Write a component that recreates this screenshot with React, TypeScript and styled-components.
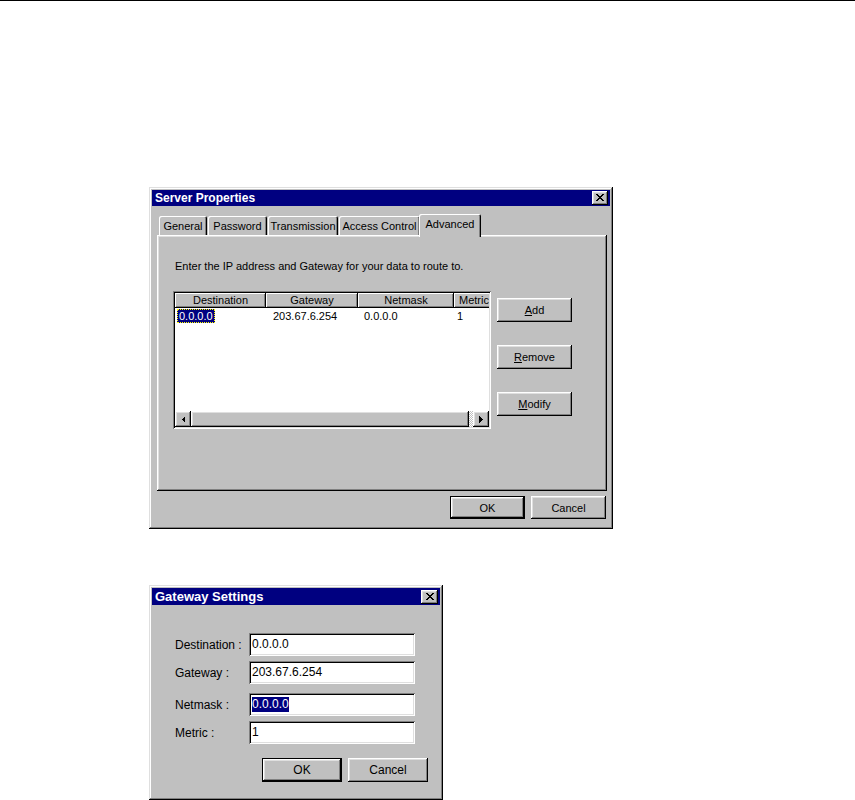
import React from "react";
import styled, { createGlobalStyle } from "styled-components";

const Global = createGlobalStyle`
  html, body { margin: 0; padding: 0; background: #fff; }
  body { font-family: "Liberation Sans", Arial, sans-serif; color: #000; }
  * { box-sizing: border-box; }
`;

const Page = styled.div`
  width: 855px;
  height: 800px;
  overflow: hidden;
  background: #fff;
`;

const TopRule = styled.div`
  height: 1px;
  background: #000;
`;

const raised = `
  box-shadow: inset -1px -1px #000, inset 1px 1px #fff, inset -2px -2px #808080, inset 2px 2px #dfdfdf;
`;

const sunken = `
  box-shadow: inset 1px 1px #808080, inset -1px -1px #fff, inset 2px 2px #000, inset -2px -2px #dfdfdf;
`;

const Win = styled.div<{ $w: number; $h: number; $mt: number; $fs: number }>`
  width: ${(p) => p.$w}px;
  height: ${(p) => p.$h}px;
  margin: ${(p) => p.$mt}px 0 0 149px;
  background: #c0c0c0;
  padding: 3px;
  font-size: ${(p) => p.$fs}px;
  box-shadow: inset -1px -1px #000, inset 1px 1px #dfdfdf, inset -2px -2px #808080, inset 2px 2px #fff;
  display: flex;
  flex-direction: column;
`;

const TitleBar = styled.div<{ $h: number; $fs: number }>`
  height: ${(p) => p.$h}px;
  background: #000080;
  color: #fff;
  font-weight: bold;
  font-size: ${(p) => p.$fs}px;
  display: flex;
  align-items: center;
  justify-content: space-between;
  padding: 0 2px 0 3px;
  flex-shrink: 0;
`;

const CloseBtn = styled.div<{ $w: number; $h: number }>`
  width: ${(p) => p.$w}px;
  height: ${(p) => p.$h}px;
  background: #c0c0c0;
  ${raised}
  display: flex;
  align-items: center;
  justify-content: center;
  padding-bottom: 1px;
`;

const CloseIcon = () => (
  <svg width="8" height="7" viewBox="0 0 8 7" shapeRendering="crispEdges">
    <path
      d="M0 0h2v1h-2zM6 0h2v1h-2zM1 1h2v1h-2zM5 1h2v1h-2zM2 2h4v1h-4zM3 3h2v1h-2zM2 4h4v1h-4zM1 5h2v1h-2zM5 5h2v1h-2zM0 6h2v1h-2zM6 6h2v1h-2z"
      fill="#000"
    />
  </svg>
);

/* ---------- Server Properties ---------- */

const Body1 = styled.div`
  display: flex;
  flex-direction: column;
  padding: 8px 3px 0 5px;
  flex: 1;
`;

const TabStrip = styled.div`
  display: flex;
  align-items: flex-end;
  height: 21px;
  padding-left: 2px;
  position: relative;
  z-index: 1;
`;

const Tab = styled.div<{ $w: number; $active?: boolean }>`
  width: ${(p) => p.$w}px;
  height: ${(p) => (p.$active ? 23 : 19)}px;
  margin: ${(p) => (p.$active ? "0 -2px -2px -2px" : "0 1px 0 0")};
  padding-bottom: ${(p) => (p.$active ? 4 : 0)}px;
  background: #c0c0c0;
  border-top-left-radius: 2px;
  border-top-right-radius: 2px;
  box-shadow: inset 1px 1px #fff, inset -1px 0 #000, inset -2px 0 #808080;
  display: flex;
  align-items: center;
  justify-content: center;
  font-size: 11px;
  white-space: nowrap;
`;

const Panel = styled.div`
  width: 450px;
  height: 256px;
  background: #c0c0c0;
  box-shadow: inset -1px -1px #000, inset 1px 1px #fff, inset -2px -2px #808080, inset 2px 2px #dfdfdf;
  padding: 24px 0 0 16px;
  display: flex;
  flex-direction: column;
`;

const Hint = styled.div`
  font-size: 11px;
  line-height: 14px;
  padding-left: 2px;
`;

const ContentRow = styled.div`
  display: flex;
  gap: 6px;
  margin-top: 18px;
`;

const ListView = styled.div`
  width: 318px;
  height: 138px;
  background: #fff;
  ${sunken}
  padding: 2px;
  display: flex;
  flex-direction: column;
  overflow: hidden;
`;

const HeaderRow = styled.div`
  display: flex;
  height: 15px;
  flex-shrink: 0;
  overflow: hidden;
`;

const HeaderCell = styled.div<{ $w: number }>`
  width: ${(p) => p.$w}px;
  flex-shrink: 0;
  background: #c0c0c0;
  box-shadow: inset -1px -1px #000, inset 1px 1px #fff, inset -2px -2px #808080;
  font-size: 11px;
  line-height: 14px;
  text-align: center;
  white-space: nowrap;
  overflow: hidden;
`;

const DataRow = styled.div`
  display: flex;
  height: 14px;
  margin-top: 1px;
  font-size: 11px;
  line-height: 14px;
`;

const DataCell = styled.div<{ $w: number; $pl: number }>`
  width: ${(p) => p.$w}px;
  flex-shrink: 0;
  padding-left: ${(p) => p.$pl}px;
  white-space: nowrap;
`;

const Selected = styled.span`
  display: inline-block;
  background: #000080;
  color: #fff;
  border: 1px dotted #ffff00;
  line-height: 12px;
  padding: 0 1px;
`;

const ListSpacer = styled.div`
  flex: 1;
`;

const HScroll = styled.div`
  display: flex;
  height: 16px;
  flex-shrink: 0;
`;

const ArrowBtn = styled.div`
  width: 16px;
  height: 16px;
  background: #c0c0c0;
  ${raised}
  display: flex;
  align-items: center;
  justify-content: center;
`;

const Thumb = styled.div`
  width: 278px;
  height: 16px;
  background: #c0c0c0;
  ${raised}
`;

const Track = styled.div`
  flex: 1;
  background-image: repeating-conic-gradient(#c0c0c0 0 25%, #fff 0 50%);
  background-size: 2px 2px;
`;

const ArrowLeft = () => (
  <svg width="4" height="7" viewBox="0 0 4 7" shapeRendering="crispEdges">
    <polygon points="4,0 4,7 0.5,3.5" fill="#000" />
  </svg>
);

const ArrowRight = () => (
  <svg width="4" height="7" viewBox="0 0 4 7" shapeRendering="crispEdges">
    <polygon points="0,0 0,7 3.5,3.5" fill="#000" />
  </svg>
);

const SideButtons = styled.div`
  display: flex;
  flex-direction: column;
  gap: 23px;
  padding-top: 7px;
`;

const Button = styled.div<{ $w: number; $h: number; $default?: boolean; $fs: number }>`
  width: ${(p) => p.$w}px;
  height: ${(p) => p.$h}px;
  background: #c0c0c0;
  font-size: ${(p) => p.$fs}px;
  display: flex;
  align-items: center;
  justify-content: center;
  border: ${(p) => (p.$default ? "1px solid #000" : "none")};
  ${raised}
  u { text-decoration: underline; text-underline-offset: 1px; }
`;

const BottomRow = styled.div`
  display: flex;
  justify-content: flex-end;
  gap: 6px;
  margin-top: 5px;
  padding-right: 1px;
`;

/* ---------- Gateway Settings ---------- */

const Body2 = styled.div`
  display: flex;
  flex-direction: column;
  padding: 0 0 0 23px;
`;

const FieldRow = styled.div<{ $mt: number }>`
  display: grid;
  grid-template-columns: 74px 166px;
  align-items: center;
  margin-top: ${(p) => p.$mt}px;
`;

const Label = styled.div`
  font-size: 12px;
  white-space: nowrap;
`;

const Input = styled.div`
  height: 23px;
  background: #fff;
  ${sunken}
  padding: 2px 3px;
  font-size: 12px;
  line-height: 17px;
  display: flex;
  align-items: center;
`;

const SelText = styled.span`
  background: #000080;
  color: #fff;
  line-height: 15px;
`;

const DialogButtons = styled.div`
  display: flex;
  justify-content: flex-end;
  gap: 6px;
  margin-top: 14px;
  padding-right: 12px;
`;

const tabs = [
  { label: "General", w: 48 },
  { label: "Password", w: 59 },
  { label: "Transmission", w: 70 },
  { label: "Access Control", w: 81 },
  { label: "Advanced", w: 62, active: true },
];

const cols = [
  { label: "Destination", w: 91 },
  { label: "Gateway", w: 92 },
  { label: "Netmask", w: 96 },
  { label: "Metric", w: 40 },
];

export default function App() {
  return (
    <Page>
      <Global />
      <TopRule />
      <Win $w={464} $h={342} $mt={186} $fs={11}>
        <TitleBar $h={16} $fs={12}>
          <span>Server Properties</span>
          <CloseBtn $w={16} $h={14}>
            <CloseIcon />
          </CloseBtn>
        </TitleBar>
        <Body1>
          <TabStrip>
            {tabs.map((t) => (
              <Tab key={t.label} $w={t.w} $active={t.active}>
                {t.label}
              </Tab>
            ))}
          </TabStrip>
          <Panel>
            <Hint>Enter the IP address and Gateway for your data to route to.</Hint>
            <ContentRow>
              <ListView>
                <HeaderRow>
                  {cols.map((c) => (
                    <HeaderCell key={c.label} $w={c.w}>
                      {c.label}
                    </HeaderCell>
                  ))}
                </HeaderRow>
                <DataRow>
                  <DataCell $w={91} $pl={2}>
                    <Selected>0.0.0.0</Selected>
                  </DataCell>
                  <DataCell $w={92} $pl={7}>203.67.6.254</DataCell>
                  <DataCell $w={96} $pl={6}>0.0.0.0</DataCell>
                  <DataCell $w={35} $pl={3}>1</DataCell>
                </DataRow>
                <ListSpacer />
                <HScroll>
                  <ArrowBtn>
                    <ArrowLeft />
                  </ArrowBtn>
                  <Thumb />
                  <Track />
                  <ArrowBtn>
                    <ArrowRight />
                  </ArrowBtn>
                </HScroll>
              </ListView>
              <SideButtons>
                <Button $w={75} $h={24} $fs={11}>
                  <span>
                    <u>A</u>dd
                  </span>
                </Button>
                <Button $w={75} $h={24} $fs={11}>
                  <span>
                    <u>R</u>emove
                  </span>
                </Button>
                <Button $w={75} $h={24} $fs={11}>
                  <span>
                    <u>M</u>odify
                  </span>
                </Button>
              </SideButtons>
            </ContentRow>
          </Panel>
          <BottomRow>
            <Button $w={75} $h={23} $fs={11} $default>
              OK
            </Button>
            <Button $w={75} $h={23} $fs={11}>
              Cancel
            </Button>
          </BottomRow>
        </Body1>
      </Win>

      <Win $w={294} $h={215} $mt={56} $fs={12}>
        <TitleBar $h={17} $fs={13}>
          <span>Gateway Settings</span>
          <CloseBtn $w={17} $h={14}>
            <CloseIcon />
          </CloseBtn>
        </TitleBar>
        <Body2>
          <FieldRow $mt={28}>
            <Label>Destination :</Label>
            <Input>0.0.0.0</Input>
          </FieldRow>
          <FieldRow $mt={5}>
            <Label>Gateway :</Label>
            <Input>203.67.6.254</Input>
          </FieldRow>
          <FieldRow $mt={9}>
            <Label>Netmask :</Label>
            <Input>
              <SelText>0.0.0.0</SelText>
            </Input>
          </FieldRow>
          <FieldRow $mt={5}>
            <Label>Metric :</Label>
            <Input>1</Input>
          </FieldRow>
          <DialogButtons>
            <Button $w={80} $h={24} $fs={12} $default>
              OK
            </Button>
            <Button $w={80} $h={24} $fs={12}>
              Cancel
            </Button>
          </DialogButtons>
        </Body2>
      </Win>
    </Page>
  );
}
